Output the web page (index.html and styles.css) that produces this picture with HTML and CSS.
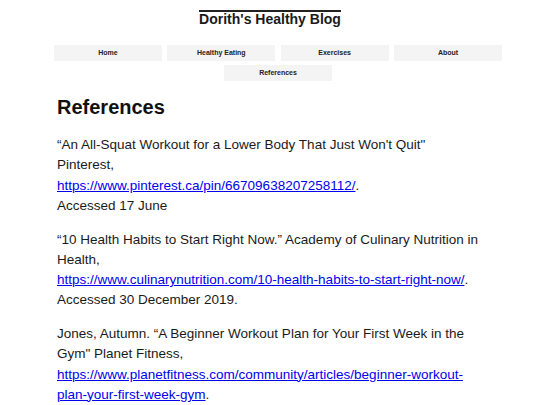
FILE: index.html
```html
<!DOCTYPE html>
<html lang="en">
<head>
  <meta charset="UTF-8" />
  <meta name="viewport" content="width=device-width, initial-scale=1.0"/>
  <title>References | Dorith's Healthy Blog</title>
  <link rel="stylesheet" href="styles.css">
</head>
<body>
  <header class="site-header">
    <h1 class="site-title">Dorith's Healthy Blog</h1>
  </header>

  <nav class="main-nav">
    <a class="nav-link" href="#">Home</a>
    <a class="nav-link" href="#">Healthy Eating</a>
    <a class="nav-link" href="#">Exercises</a>
    <a class="nav-link" href="#">About</a>
    <a class="nav-link" href="#">References</a>
  </nav>

  <main class="content">
    <h2 class="page-title">References</h2>

    <p class="ref">
      “An All-Squat Workout for a Lower Body That Just Won't Quit" Pinterest,<br>
      <a href="#">https://www.pinterest.ca/pin/66709638207258112/</a>.<br>
      Accessed 17 June
    </p>

    <p class="ref">
      “10 Health Habits to Start Right Now.” Academy of Culinary Nutrition in Health,<br>
      <a href="#">https://www.culinarynutrition.com/10-health-habits-to-start-right-now/</a>.<br>
      Accessed 30 December 2019.
    </p>

    <p class="ref">
      Jones, Autumn. “A Beginner Workout Plan for Your First Week in the Gym" Planet Fitness,<br>
      <a href="#">https://www.planetfitness.com/community/articles/beginner-workout-plan-your-first-week-gym</a>.<br>
      Accessed 30 December 2019.
    </p>
  </main>
</body>
</html>
```

FILE: styles.css
```css
body {
  margin: 8px;
  font-family: "Liberation Sans", Arial, sans-serif;
  color: #1a1a1a;
  background: #ffffff;
}

.site-header {
  text-align: center;
}

.site-title {
  display: inline-block;
  margin: 2px 0 0;
  border-top: 2px solid #222;
  font-size: 14px;
  line-height: 14px;
  font-weight: bold;
}

.main-nav {
  display: flex;
  flex-wrap: wrap;
  justify-content: center;
  gap: 4px 5.33px;
  margin: 17px 0 0 16px;
}

.nav-link {
  width: 108px;
  height: 16px;
  line-height: 16px;
  background: #f4f4f4;
  color: #222;
  font-size: 7px;
  font-weight: bold;
  text-align: center;
  text-decoration: none;
}

.content {
  margin: 0 51px 0 49px;
}

.page-title {
  margin: 15px 0 16px;
  font-size: 20px;
  font-weight: bold;
  color: #111;
}

.ref {
  margin: 0 0 13.5px;
  font-size: 13.5px;
  line-height: 1.5;
}

.ref a {
  color: #0000ee;
}
```
